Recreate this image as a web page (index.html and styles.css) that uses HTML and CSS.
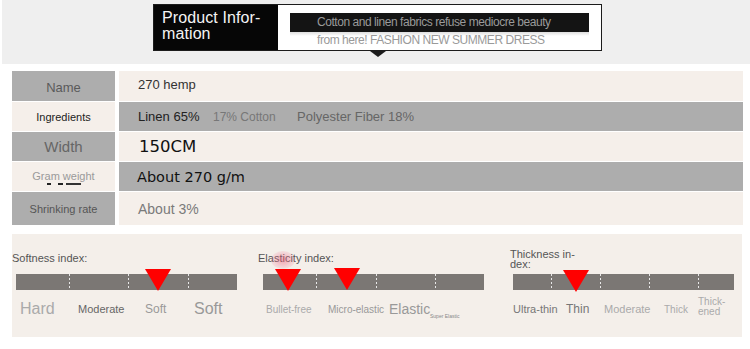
FILE: index.html
```html
<!DOCTYPE html>
<html>
<head>
<meta charset="utf-8">
<link rel="stylesheet" href="styles.css">
</head>
<body>
<div class="top">
  <div class="hdr">
    <div class="hdr-title">Product Infor-<br>mation</div>
    <div class="hdr-body">
      <div class="hdr-text">Cotton and linen fabrics refuse mediocre beauty<br>from here! FASHION NEW SUMMER DRESS</div>
    </div>
  </div>
</div>

<div class="table">
  <div class="row r1">
    <div class="k dark k-name">Name</div>
    <div class="v light v-name">270 hemp</div>
  </div>
  <div class="row r2">
    <div class="k light k-ing">Ingredients</div>
    <div class="v dark v-ing"><span class="ing1">Linen 65%</span><span class="ing2">17% Cotton</span><span class="ing3">Polyester Fiber 18%</span></div>
  </div>
  <div class="row r3">
    <div class="k dark k-width">Width</div>
    <div class="v light v-width">150CM</div>
  </div>
  <div class="row r4">
    <div class="k light k-gram"><span>Gram weight</span><span class="smudge"></span></div>
    <div class="v dark v-gram">About 270 g/m</div>
  </div>
  <div class="row r5">
    <div class="k dark k-shrink">Shrinking rate</div>
    <div class="v light v-shrink">About 3%</div>
  </div>
</div>

<div class="panel">
  <div class="idx c1">
    <div class="idx-label">Softness index:</div>
    <div class="bar">
      <span class="seg s53"></span><span class="seg sep s59"></span><span class="seg sep s60"></span><span class="seg sep s49"></span>
      <span class="tri tri-soft"></span>
    </div>
    <div class="ticks">
      <span class="tk soft-hard">Hard</span>
      <span class="tk soft-mod">Moderate</span>
      <span class="tk soft-soft">Soft</span>
      <span class="tk soft-soft2">Soft</span>
    </div>
  </div>

  <div class="idx c2">
    <div class="idx-label">Elasticity index:</div>
    <div class="bar">
      <span class="seg s53"></span><span class="seg sep s60"></span><span class="seg sep s59"></span><span class="seg sep s49"></span>
      <span class="blob"></span>
      <span class="tri tri-el1"></span>
      <span class="tri tri-el2"></span>
    </div>
    <div class="ticks">
      <span class="tk el-bullet">Bullet-free</span>
      <span class="tk el-micro">Micro-elastic</span>
      <span class="tk el-elastic">Elastic</span>
      <span class="tk el-super">Super Elastic</span>
    </div>
  </div>

  <div class="idx c3">
    <div class="idx-label two">Thickness in-<br>dex:</div>
    <div class="bar">
      <span class="seg s38"></span><span class="seg sep s49"></span><span class="seg sep s49"></span><span class="seg sep s49"></span><span class="seg sep s36"></span>
      <span class="tri tri-thick"></span>
    </div>
    <div class="ticks">
      <span class="tk th-ultra">Ultra-thin</span>
      <span class="tk th-thin">Thin</span>
      <span class="tk th-mod">Moderate</span>
      <span class="tk th-thick">Thick</span>
      <span class="tk th-thickened">Thick-<br>ened</span>
    </div>
  </div>
</div>
</body>
</html>
```

FILE: styles.css
```css
* { box-sizing: border-box; }
html, body { margin: 0; padding: 0; background: #fff; }
body {
  width: 750px;
  height: 349px;
  overflow: hidden;
  font-family: "Liberation Sans", Arial, sans-serif;
}

/* ---------- header band ---------- */
.top {
  background: #efefef;
  height: 64px;
  margin-left: 2px;
  padding-top: 4px;
}
.hdr {
  position: relative;
  margin-left: 151px;
  width: 449px;
  height: 47px;
  border: 1px solid #1c1c1c;
  display: flex;
  background: #fff;
}
.hdr::after {
  content: "";
  position: absolute;
  left: 216px;
  bottom: -7px;
  border-left: 8px solid transparent;
  border-right: 8px solid transparent;
  border-top: 6px solid #1c1c1c;
}
.hdr-title {
  width: 124px;
  background: #060606;
  color: #f4f4f4;
  font-size: 16px;
  line-height: 16px;
  padding: 5px 0 0 8px;
  letter-spacing: 0.1px;
}
.hdr-body {
  flex: 1;
  padding: 8px 0 0 12px;
}
.hdr-text {
  width: 299px;
  padding-left: 27px;
  font-size: 12px;
  letter-spacing: -0.45px;
  line-height: 18px;
  color: #9a9a9a;
  background: linear-gradient(to bottom, #141414 0, #141414 19px, rgba(120,120,120,0.25) 19px, rgba(255,255,255,0) 23px);
}

/* ---------- table ---------- */
.table {
  margin: 7px 0 0 12px;
  width: 731px;
  display: flex;
  flex-direction: column;
  gap: 1px;
}
.row { display: flex; gap: 4px; }
.r1 { height: 30px; }
.r2 { height: 29px; }
.r3 { height: 29px; }
.r4 { height: 29px; }
.r5 { height: 33px; }
.dark { background: #adadad; }
.light { background: #f5efea; }
.k {
  width: 103px;
  display: flex;
  align-items: center;
  justify-content: center;
  flex-direction: column;
}
.v {
  flex: 1;
  display: flex;
  align-items: center;
  padding-left: 19px;
}
.k-name { font-size: 13px; color: #5a5a5a; padding-top: 2px; }
.k-ing { font-size: 11px; color: #222; }
.k-width { font-size: 15px; color: #666; }
.k-gram { font-size: 11px; color: #9a9a9a; padding-top: 2px; }
.smudge {
  display: block;
  width: 34px;
  height: 2px;
  margin-top: 1px;
  background: linear-gradient(to right, #222 0, #222 4px, transparent 4px, transparent 11px, #222 11px, #222 16px, transparent 16px, transparent 19px, #333 19px, #333 34px);
}
.k-shrink { font-size: 11px; color: #555; }

.v-name { font-size: 13px; color: #333; padding-bottom: 3px; }
.v-ing { font-size: 13px; }
.ing1 { color: #222; width: 75px; }
.ing2 { color: #777; font-size: 12px; width: 84px; }
.ing3 { color: #666; }
.v-width {
  font-family: "DejaVu Sans", Verdana, sans-serif;
  font-size: 16.5px;
  color: #111;
  padding-left: 20px;
}
.v-gram {
  font-family: "DejaVu Sans", Verdana, sans-serif;
  font-size: 14.5px;
  color: #111;
  padding-left: 18px;
}
.v-shrink { font-size: 14px; color: #7a7a7a; }

/* ---------- index panel ---------- */
.panel {
  margin: 9px 0 0 12px;
  width: 730px;
  height: 103px;
  background: #f4efea;
  display: grid;
  grid-template-columns: 246px 252px 1fr;
}
.idx { display: flex; flex-direction: column; }
.idx-label {
  height: 40px;
  display: flex;
  align-items: flex-end;
  padding-bottom: 9px;
  font-size: 11px;
  line-height: 13px;
  color: #555;
}
.idx-label.two {
  display: block;
  padding-top: 15px;
  line-height: 10px;
}
.bar {
  position: relative;
  width: 221px;
  height: 16px;
  background: #7b7774;
  display: flex;
}
.c1 .bar { margin-left: 4px; }
.c2 .bar { margin-left: 5px; }
.c3 .bar { margin-left: 3px; }
.seg { height: 100%; }
.sep {
  background-image: linear-gradient(to bottom, #e8e8e8 0, #e8e8e8 2px, transparent 2px);
  background-size: 1px 4px;
  background-repeat: repeat-y;
  background-position: left top;
}
.s36 { width: 36px; }
.s38 { width: 38px; }
.s49 { width: 49px; }
.s53 { width: 53px; }
.s59 { width: 59px; }
.s60 { width: 60px; }

.tri {
  position: absolute;
  width: 0;
  height: 0;
  border-left: 13px solid transparent;
  border-right: 13px solid transparent;
  border-top: 22px solid #ff0000;
}
.tri-soft { left: 129px; top: -5px; }
.tri-el1 { left: 12px; top: -5px; }
.tri-el2 { left: 71px; top: -6px; }
.tri-thick { left: 50px; top: -4px; }
.blob {
  position: absolute;
  left: 8px;
  top: -23px;
  width: 24px;
  height: 18px;
  border-radius: 50%;
  background: radial-gradient(ellipse at center, rgba(240,90,120,0.5) 0, rgba(240,120,150,0.2) 60%, rgba(255,255,255,0) 100%);
}

.ticks {
  display: flex;
  align-items: center;
  height: 20px;
  margin-top: 9px;
  white-space: nowrap;
}
.c1 .ticks { padding-left: 8px; }
.c2 .ticks { padding-left: 8px; }
.c3 .ticks { padding-left: 3px; }
.tk { display: block; }

.soft-hard { width: 58px; font-size: 16px; color: #aaa; }
.soft-mod { width: 67px; font-size: 11px; color: #666; }
.soft-soft { width: 49px; font-size: 12px; color: #999; }
.soft-soft2 { font-size: 16px; color: #999; }

.el-bullet { width: 62px; font-size: 10px; color: #aaa; }
.el-micro { width: 61px; font-size: 10px; color: #999; }
.el-elastic { width: 41px; font-size: 14px; color: #999; }
.el-super { font-size: 5px; color: #888; align-self: flex-end; }

.th-ultra { width: 53px; font-size: 11px; color: #777; }
.th-thin { width: 38px; font-size: 12px; color: #777; }
.th-mod { width: 60px; font-size: 11px; color: #aaa; }
.th-thick { width: 34px; font-size: 10px; color: #aaa; }
.th-thickened { font-size: 10px; line-height: 10px; color: #aaa; margin-top: -4px; }
```
